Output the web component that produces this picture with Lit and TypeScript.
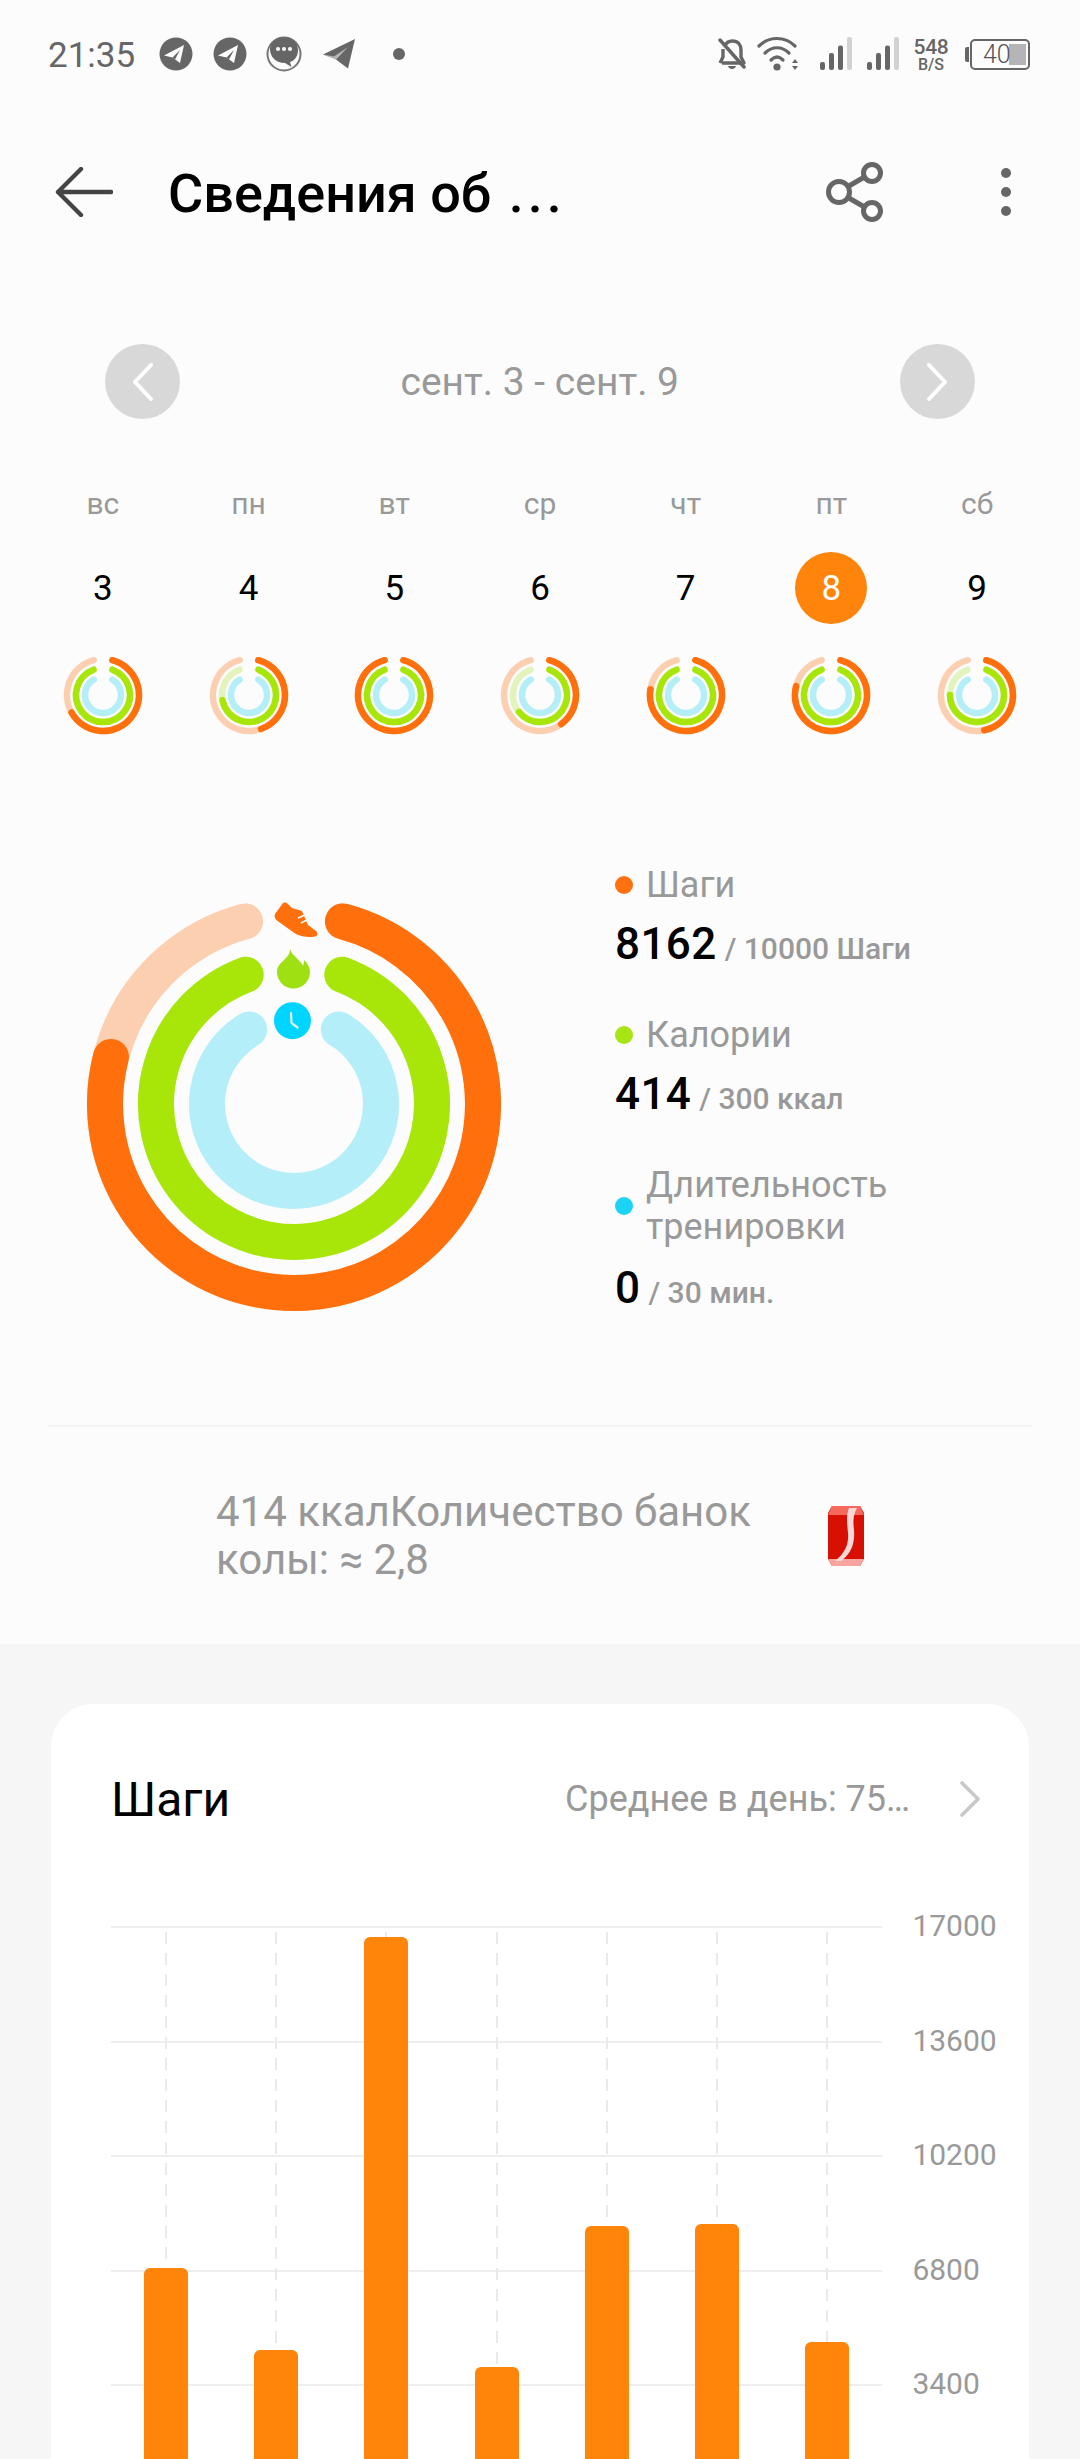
import { LitElement, html, css, svg } from "lit";
import { customElement } from "lit/decorators.js";

const polar = (c: number, c2: number, r: number, deg: number) => {
  const a = (deg * Math.PI) / 180;
  return [c + r * Math.sin(a), c2 - r * Math.cos(a)];
};
const arc = (cx: number, cy: number, r: number, from: number, to: number) => {
  const [x1, y1] = polar(cx, cy, r, from);
  const [x2, y2] = polar(cx, cy, r, to);
  const large = to - from > 180 ? 1 : 0;
  return `M${x1.toFixed(2)} ${y1.toFixed(2)}A${r} ${r} 0 ${large} 1 ${x2.toFixed(2)} ${y2.toFixed(2)}`;
};

const ORANGE = "#ff6f0b", ORANGE_L = "#fccfb1", GREEN = "#a8e60a", GREEN_L = "#e2f3bc", BLUE_L = "#b4eef8";

const rings = (cx: number, cy: number, rs: number[], w: number, outerEnd: number, greenEnd: number) => svg`
  <path d=${arc(cx, cy, rs[0], 15, 345)} stroke=${ORANGE_L} stroke-width=${w} fill="none" stroke-linecap="round"/>
  <path d=${arc(cx, cy, rs[0], 15, outerEnd)} stroke=${ORANGE} stroke-width=${w} fill="none" stroke-linecap="round"/>
  <path d=${arc(cx, cy, rs[1], 20.5, 339.5)} stroke=${GREEN_L} stroke-width=${w} fill="none" stroke-linecap="round"/>
  <path d=${arc(cx, cy, rs[1], 20.5, greenEnd)} stroke=${GREEN} stroke-width=${w} fill="none" stroke-linecap="round"/>
  <path d=${arc(cx, cy, rs[2], 31, 329)} stroke=${BLUE_L} stroke-width=${w} fill="none" stroke-linecap="round"/>
`;

const days = [
  { name: "вс", num: 3, steps: 6845, green: 339.5 },
  { name: "пн", num: 4, steps: 4410, green: 259 },
  { name: "вт", num: 5, steps: 16675, green: 339.5 },
  { name: "ср", num: 6, steps: 3905, green: 231 },
  { name: "чт", num: 7, steps: 8000, green: 339.5 },
  { name: "пт", num: 8, steps: 8162, green: 339.5 },
  { name: "сб", num: 9, steps: 4647, green: 270 },
];
const ticks = [17000, 13600, 10200, 6800, 3400];
const PLOT_H = 572.5;
const outerEnd = (steps: number) => Math.min(345, 15 + (steps / 10000) * 330);

const tgCircle = html`<svg class="ic" width="34" height="34" viewBox="0 0 34 34">
  <circle cx="17" cy="17" r="16.5" fill="#666"/>
  <path d="M5 18.5 25 8 21 26 13.5 20.5Z" fill="#fff"/>
  <path d="M13.5 20.5 21 13 16 22.5Z" fill="#666"/>
</svg>`;

const signal = svg`
  <rect x="0" y="25" width="5" height="8" rx="2" fill="#666"/><rect x="9" y="16" width="5" height="17" rx="2" fill="#666"/>
  <rect x="18" y="8.5" width="5" height="24.5" rx="2" fill="#666"/><rect x="27" y="0" width="5" height="33" rx="2" fill="#d2d2d2"/>`;

@customElement("app-root")
export class AppRoot extends LitElement {
  static styles = css`
    :host { display: block; width: 1080px; height: 2459px; overflow: hidden; background: #fcfcfc;
      font-family: Roboto, "Noto Sans", sans-serif; color: #000; }
    * { box-sizing: border-box; }
    .status { height: 108px; padding-left: 48px; display: flex; align-items: center; color: #666; }
    .time { font-size: 35px; width: 111px; position: relative; top: 1px; flex: none; }
    .nicons { display: flex; align-items: center; gap: 19.5px; }
    .ic { display: block; flex: none; }
    .dot12 { margin-left: 18px; }
    .sright { margin-left: auto; display: flex; align-items: center; padding-right: 50px; }
    .bell { margin-right: 10px; }
    .wifi { margin-right: 19px; }
    .sig1 { margin-right: 15px; }
    .net { display: flex; flex-direction: column; align-items: center; width: 34px; margin: 0 17px 0 15px; font-weight: 500; }
    .net b { font-weight: 500; font-size: 21px; line-height: 20px; letter-spacing: -.3px; }
    .net i { font-style: normal; font-size: 16px; line-height: 15px; }
    .batt { position: relative; width: 60px; height: 31px; border: 2.5px solid #666; border-radius: 5px; }
    .nub { width: 4px; height: 15px; background: #666; border-radius: 2px 0 0 2px; margin-right: 1px; }
    .fill { position: absolute; top: 3px; bottom: 3px; right: 2px; width: 17px; background: #b5b5b5; }
    .pct { position: absolute; left: 11px; top: 0; font-size: 25px; line-height: 27px; font-weight: 300; color: #555; }
    .hdr { height: 168px; display: flex; align-items: center; padding-left: 55px; }
    .title { margin-left: 55px; font-size: 54px; font-weight: 500; width: 658px; white-space: nowrap; position: relative; top: 1px; flex: none; }
    .ell { letter-spacing: 4px; margin-left: 4px; }
    .more { margin-left: 117px; display: flex; flex-direction: column; gap: 9px; }
    .more span { width: 10px; height: 10px; border-radius: 50%; background: #666; display: block; }
    .nav { margin-top: 68px; height: 75px; padding: 0 105.5px 0 105px; display: flex; align-items: center; justify-content: space-between; }
    .navb { width: 75px; height: 75px; border-radius: 50%; background: #d8d8d8; display: flex; align-items: center; justify-content: center; }
    .range { font-size: 39px; color: #999; }
    .week { margin-top: 65px; padding: 0 30px; display: grid; grid-template-columns: repeat(7, 1fr); justify-items: center; }
    .wd { font-size: 30px; line-height: 40px; color: #999; }
    .dn { margin-top: 28px; width: 72px; height: 72px; font-size: 35px; display: flex; align-items: center; justify-content: center; border-radius: 50%; }
    .dn.on { background: #ff840c; color: #fff; }
    .mini { margin-top: 31px; display: block; }
    .sum { display: flex; height: 690px; padding-top: 162px; }
    .big { margin-left: 87px; display: block; flex: none; }
    .legend { margin-left: 114px; margin-top: -33px; width: 390px; display: flex; flex-direction: column; gap: 35px; }
    .lhead { display: flex; align-items: center; gap: 13px; }
    .dot { width: 18px; height: 18px; border-radius: 50%; flex: none; }
    .lname { font-size: 36px; line-height: 42px; color: #999; }
    .lval { margin-top: 8px; line-height: 60px; font-size: 44px; font-weight: 500; letter-spacing: .4px; white-space: nowrap; }
    .lval.tall { margin-top: 10px; }
    .lval span { font-size: 30px; color: #999; margin-left: 8px; letter-spacing: 0; }
    .divider { margin: 0 48px; height: 2px; background: #f3f3f3; }
    .cola { height: 217px; padding: 0 216px; display: flex; align-items: center; justify-content: space-between; }
    .cola p { margin: 0; width: 580px; font-size: 42px; line-height: 48px; color: #999; }
    .lower { background: #f6f6f6; padding: 60px 51px 0; height: 900px; }
    .card { background: #fff; border-radius: 42px 42px 0 0; padding: 65px 0 0 60px; height: 840px; }
    .chead { height: 60px; display: flex; align-items: center; }
    .ctitle { font-size: 48px; width: 454px; flex: none; }
    .avg { font-size: 36px; color: #999; white-space: nowrap; width: 394px; flex: none; }
    .chart { margin-top: 97px; display: flex; }
    .plot { position: relative; width: 771.4px; height: ${PLOT_H}px; flex: none; }
    .gl { height: 114.5px; border-top: 2px solid #eeeeee; }
    .cols { position: absolute; inset: 0; display: grid; grid-template-columns: repeat(7, 1fr); }
    .col { position: relative; display: flex; justify-content: center; align-items: flex-end; }
    .dash { position: absolute; top: 6px; bottom: 0; left: 50%; width: 2px; margin-left: -1px;
      background: repeating-linear-gradient(to bottom, #eaeaea 0 12px, transparent 12px 21px); }
    .bar { position: relative; width: 44px; background: #ff850a; border-radius: 6px 6px 0 0; }
    .labels { margin: -21px 0 0 30px; }
    .labels div { height: 114.5px; font-size: 30px; line-height: 42px; color: #999; }
  `;

  render() {
    return html`
      <div class="status">
        <span class="time">21:35</span>
        <div class="nicons">
          ${tgCircle}
          ${tgCircle}
          <svg class="ic" width="36" height="36" viewBox="0 0 36 36">
            <circle cx="18" cy="18" r="16.5" fill="none" stroke="#777" stroke-width="2"/>
            <path d="M4 13C4 6 10 1.5 18 1.5S32 6 32 14C32 21 28 25 24 26L25.5 31 19 27C10 27 4 21 4 13Z" fill="#666"/>
            <circle cx="12" cy="13" r="2" fill="#fff"/><circle cx="18" cy="13" r="2" fill="#fff"/><circle cx="24" cy="13" r="2" fill="#fff"/>
          </svg>
          <svg class="ic" width="34" height="30" viewBox="0 0 34 30">
            <path d="M1 15.5 33 0 26 29.5 14 20.5Z" fill="#666"/>
            <path d="M1 15.5 12 17.5 26 8 14 20.5Z" fill="#fcfcfc" opacity=".55"/>
          </svg>
          <svg class="ic dot12" width="12" height="12" viewBox="0 0 12 12"><circle cx="6" cy="6" r="6" fill="#666"/></svg>
        </div>
        <div class="sright">
          <svg class="ic bell" width="30" height="33" viewBox="0 0 30 33">
            <path d="M8 8C9 5 12 3 15.5 3 21 3 24 7 24 12V19L27 25H5" fill="none" stroke="#666" stroke-width="3.4" stroke-linejoin="round"/>
            <path d="M6 11V19L3 25" fill="none" stroke="#666" stroke-width="3.4"/>
            <path d="M3 2 27 29" stroke="#666" stroke-width="3.4" stroke-linecap="round"/>
            <path d="M11 28H19C18 32 12 32 11 28Z" fill="#666"/>
          </svg>
          <svg class="ic wifi" width="44" height="36" viewBox="0 0 44 36">
            <path d="M2 10C12 0 28 0 38 10" fill="none" stroke="#666" stroke-width="3.2" stroke-linecap="round"/>
            <path d="M8 17C15 10 25 10 32 17" fill="none" stroke="#666" stroke-width="3.2" stroke-linecap="round"/>
            <path d="M14 24C18 20 22 20 26 24" fill="none" stroke="#666" stroke-width="3.2" stroke-linecap="round"/>
            <circle cx="20" cy="31" r="3.6" fill="#666"/>
            <path d="M35 27 38 23 41 27ZM35 30 41 30 38 34Z" fill="#666"/>
          </svg>
          <svg class="ic sig1" width="32" height="34" viewBox="0 0 32 34">${signal}</svg>
          <svg class="ic" width="32" height="34" viewBox="0 0 32 34">${signal}</svg>
          <div class="net"><b>548</b><i>B/S</i></div>
          <div class="nub"></div>
          <div class="batt"><div class="fill"></div><span class="pct">40</span></div>
        </div>
      </div>

      <div class="hdr">
        <svg class="ic" width="58" height="50" viewBox="0 0 58 50">
          <path d="M56 25H3M26 2 3 25 26 48" fill="none" stroke="#444" stroke-width="4.4" stroke-linecap="round" stroke-linejoin="round"/>
        </svg>
        <div class="title">Сведения об <span class="ell">...</span></div>
        <svg class="ic" width="58" height="60" viewBox="0 0 58 60">
          <circle cx="13" cy="30" r="10.5" fill="none" stroke="#666" stroke-width="5"/>
          <circle cx="46" cy="11" r="8.5" fill="none" stroke="#666" stroke-width="5"/>
          <circle cx="46" cy="49" r="8.5" fill="none" stroke="#666" stroke-width="5"/>
          <path d="M22 24.5 38.5 15M22 35.5 38.5 45" stroke="#666" stroke-width="5"/>
        </svg>
        <div class="more"><span></span><span></span><span></span></div>
      </div>

      <div class="nav">
        <div class="navb"><svg width="22" height="38" viewBox="0 0 22 38"><path d="M19 2 3 19 19 36" fill="none" stroke="#fff" stroke-width="4" stroke-linecap="round" stroke-linejoin="round"/></svg></div>
        <span class="range">сент. 3 - сент. 9</span>
        <div class="navb"><svg width="22" height="38" viewBox="0 0 22 38"><path d="M3 2 19 19 3 36" fill="none" stroke="#fff" stroke-width="4" stroke-linecap="round" stroke-linejoin="round"/></svg></div>
      </div>

      <div class="week">
        ${days.map((d) => html`<span class="wd">${d.name}</span>`)}
        ${days.map((d) => html`<span class="dn ${d.num === 8 ? "on" : ""}">${d.num}</span>`)}
        ${days.map((d) => html`<svg class="mini" width="80" height="80" viewBox="0 0 80 80">${rings(40, 40, [36, 27, 18], 6.5, outerEnd(d.steps), d.green)}</svg>`)}
      </div>

      <div class="sum">
        <svg class="big" width="414" height="420" viewBox="87 897 414 420">
          ${rings(294, 1104, [189, 138, 87], 36, 284.4, 339.5)}
          <path d="M275 914 283 903C285 902 287 903 288 904L292 908 302 911 308 925 316 931C319 934 317 937 312 937 304 937 298 936 293 932L279 922C275 919 274 917 275 914Z" fill="#ff6f0b"/>
          <path d="M298 918 305 915M301 923 307 920" stroke="#fff" stroke-width="1.6"/>
          <path d="M290 949C292 956 300 959 303 966L304.5 960C308 964 310 968 310 972A16.5 16.5 0 0 1 277 972C277 966 281 963 284 960 287 957 290 954 290 949Z" fill="#9fe012"/>
          <circle cx="292.5" cy="1020.7" r="18.5" fill="#00d5ff"/>
          <path d="M291 1013 291.5 1023 297.5 1027.5" fill="none" stroke="#dff8fe" stroke-width="2.2" stroke-linecap="round"/>
        </svg>
        <div class="legend">
          <div>
            <div class="lhead"><i class="dot" style="background:#ff7010"></i><span class="lname">Шаги</span></div>
            <div class="lval">8162<span>/ 10000 Шаги</span></div>
          </div>
          <div>
            <div class="lhead"><i class="dot" style="background:#a8e414"></i><span class="lname">Калории</span></div>
            <div class="lval">414<span>/ 300 ккал</span></div>
          </div>
          <div>
            <div class="lhead"><i class="dot" style="background:#1ad3f5"></i><span class="lname">Длительность<br>тренировки</span></div>
            <div class="lval tall">0<span>/ 30 мин.</span></div>
          </div>
        </div>
      </div>

      <div class="divider"></div>

      <div class="cola">
        <p>414 ккалКоличество банок колы: ≈ 2,8</p>
        <svg class="ic" width="36" height="60" viewBox="0 0 36 60">
          <path d="M4 0H32L36 7V53L32 60H4L0 53V7Z" fill="#d81002"/>
          <path d="M4 0H32L36 9H0Z" fill="#f4695c"/>
          <path d="M0 53H36L32 60H4Z" fill="#f8a5a0"/>
          <path d="M21 2H29C25 9 25 16 26 24 27 36 24 47 13 55H7C17 47 21 38 20 27 19 17 18 9 21 2Z" fill="#fbd8d8"/>
        </svg>
      </div>

      <div class="lower">
        <div class="card">
          <div class="chead">
            <span class="ctitle">Шаги</span>
            <span class="avg">Среднее в день: 75…</span>
            <svg class="ic" width="22" height="36" viewBox="0 0 22 36"><path d="M3 2 19 18 3 34" fill="none" stroke="#c8c8c8" stroke-width="3.6" stroke-linecap="round" stroke-linejoin="round"/></svg>
          </div>
          <div class="chart">
            <div class="plot">
              ${ticks.map(() => html`<div class="gl"></div>`)}
              <div class="cols">
                ${days.map((d, i) => html`<div class="col"><div class="dash"></div><div class="bar" style="height:${(([6845, 4410, 16675, 3905, 8090, 8162, 4647][i]) / 17000) * PLOT_H}px"></div></div>`)}
              </div>
            </div>
            <div class="labels">${ticks.map((t) => html`<div>${t}</div>`)}</div>
          </div>
        </div>
      </div>
    `;
  }
}
